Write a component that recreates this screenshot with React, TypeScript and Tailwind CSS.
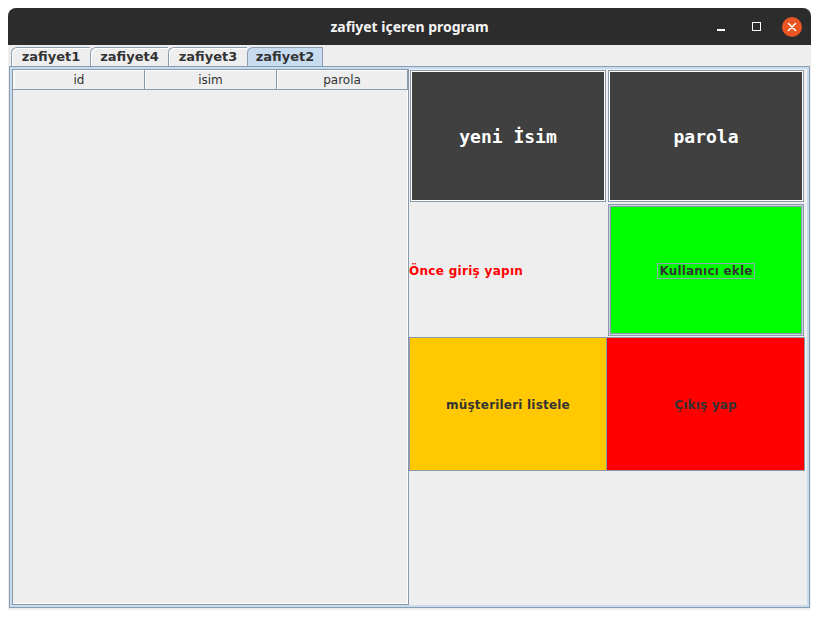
import React from "react";

const tabs = [
  { label: "zafiyet1", w: "w-[79px]", sel: false },
  { label: "zafiyet4", w: "w-[78px]", sel: false },
  { label: "zafiyet3", w: "w-[79px]", sel: false },
  { label: "zafiyet2", w: "w-[76px]", sel: true },
];

export default function App() {
  const dv = { fontFamily: '"DejaVu Sans", "Liberation Sans", sans-serif' };
  return (
    <div className="w-[820px] h-[618px] bg-white pl-[8px] pt-[8px]">
      <div className="w-[803px] h-[602px] flex flex-col rounded-t-[8px] overflow-hidden bg-[#eeeeee]">
        {/* title bar */}
        <div className="h-[37px] bg-[#2c2c2c] relative flex items-center justify-center shrink-0">
          <span
            className="text-[#f4f4f4] text-[14px] font-bold"
            style={{ fontFamily: '"Noto Sans", "Open Sans", sans-serif' }}
          >
            zafiyet içeren program
          </span>
          <div className="absolute right-[9px] top-0 h-[37px] flex items-center gap-[17px]">
            <div className="w-[18px] h-[18px] flex items-center justify-center">
              <div className="w-[8px] h-[1.5px] bg-white mt-[7px]" />
            </div>
            <div className="w-[18px] h-[18px] flex items-center justify-center">
              <div className="w-[9px] h-[9px] border-[1.5px] border-white" />
            </div>
            <div className="w-[20px] h-[20px] rounded-full bg-[#e95420] flex items-center justify-center">
              <svg width="10" height="10" viewBox="0 0 10 10">
                <path d="M1.5 1.5 L8.5 8.5 M8.5 1.5 L1.5 8.5" stroke="white" strokeWidth="1.6" strokeLinecap="round" />
              </svg>
            </div>
          </div>
        </div>

        {/* tabs */}
        <div className="h-[21px] pl-[3px] pt-[2px] flex items-end shrink-0">
          {tabs.map((t) => (
            <div
              key={t.label}
              className={`${t.w} h-[19px] flex items-center justify-center border-t border-l rounded-tl-[6px] text-[13px] font-bold text-[#333333] ${
                t.sel
                  ? "bg-[#c8dcf0] border-[#8a9cb0] border-r"
                  : "bg-[#eeeeee] border-[#8a9cb0] shadow-[inset_1px_1px_0_#ffffff]"
              }`}
              style={dv}
            >
              {t.label}
            </div>
          ))}
        </div>

        {/* content */}
        <div className="h-[542px] mx-[1px] border border-[#8a9cb0] bg-[#c8dcf0] p-[2px] shrink-0">
          <div className="h-full bg-[#eeeeee] flex">
            {/* left: table */}
            <div className="w-[397px] h-full border border-[#8a9aab] shadow-[inset_-1px_-1px_0_#ffffff] flex flex-col">
              <div className="h-[20px] flex border-b border-[#8a9aab] text-[12px] text-[#333333]" style={dv}>
                <div className="w-[131px] ml-[1px] flex items-center justify-center border-r border-[#8a9aab] shadow-[inset_1px_1px_0_#ffffff]">
                  id
                </div>
                <div className="w-[132px] flex items-center justify-center border-r border-[#8a9aab] shadow-[inset_1px_1px_0_#ffffff]">
                  isim
                </div>
                <div className="flex-1 flex items-center justify-center border-r border-[#8a9aab] shadow-[inset_1px_1px_0_#ffffff]">
                  parola
                </div>
              </div>
            </div>

            {/* right: grid */}
            <div className="w-[396px] grid grid-cols-2 grid-rows-[134px_134px_134px] content-start">
              <div className="m-[1px] border border-[#8a9aab] bg-[#404040] shadow-[inset_1px_1px_0_#ffffff,inset_-1px_-1px_0_#ffffff] flex items-center justify-center">
                <span className="text-white text-[18px] font-bold" style={{ fontFamily: '"DejaVu Sans Mono", monospace' }}>
                  yeni İsim
                </span>
              </div>
              <div className="m-[1px] border border-[#8a9aab] bg-[#404040] shadow-[inset_1px_1px_0_#ffffff,inset_-1px_-1px_0_#ffffff] flex items-center justify-center">
                <span className="text-white text-[18px] font-bold" style={{ fontFamily: '"DejaVu Sans Mono", monospace' }}>
                  parola
                </span>
              </div>

              <div className="flex items-center pt-[2px]">
                <span className="text-[#ff0000] text-[12px] font-bold tracking-[0.3px]" style={dv}>
                  Önce giriş yapın
                </span>
              </div>
              <div className="m-[1px] pt-[1px] border border-[#8a9aab] shadow-[inset_0_0_0_1px_#c8d4e0,inset_0_0_0_2px_#8a9aab] bg-[#00ff00] flex items-center justify-center">
                <div className="h-[16px] border border-[#93a5b8] px-[1px] flex items-center text-[12px] font-bold text-[#333333] tracking-[0.2px]" style={dv}>
                  Kullanıcı ekle
                </div>
              </div>

              <div className="pt-[1px] border border-[#8a9aab] bg-[#ffc800] flex items-center justify-center">
                <span className="text-[12px] font-bold text-[#333333] tracking-[0.2px]" style={dv}>
                  müşterileri listele
                </span>
              </div>
              <div className="pt-[1px] border border-l-0 border-[#8a9aab] bg-[#ff0000] flex items-center justify-center">
                <span className="text-[12px] font-bold text-[#333333] tracking-[0.2px]" style={dv}>
                  Çıkış yap
                </span>
              </div>
            </div>
          </div>
        </div>
      </div>
    </div>
  );
}
